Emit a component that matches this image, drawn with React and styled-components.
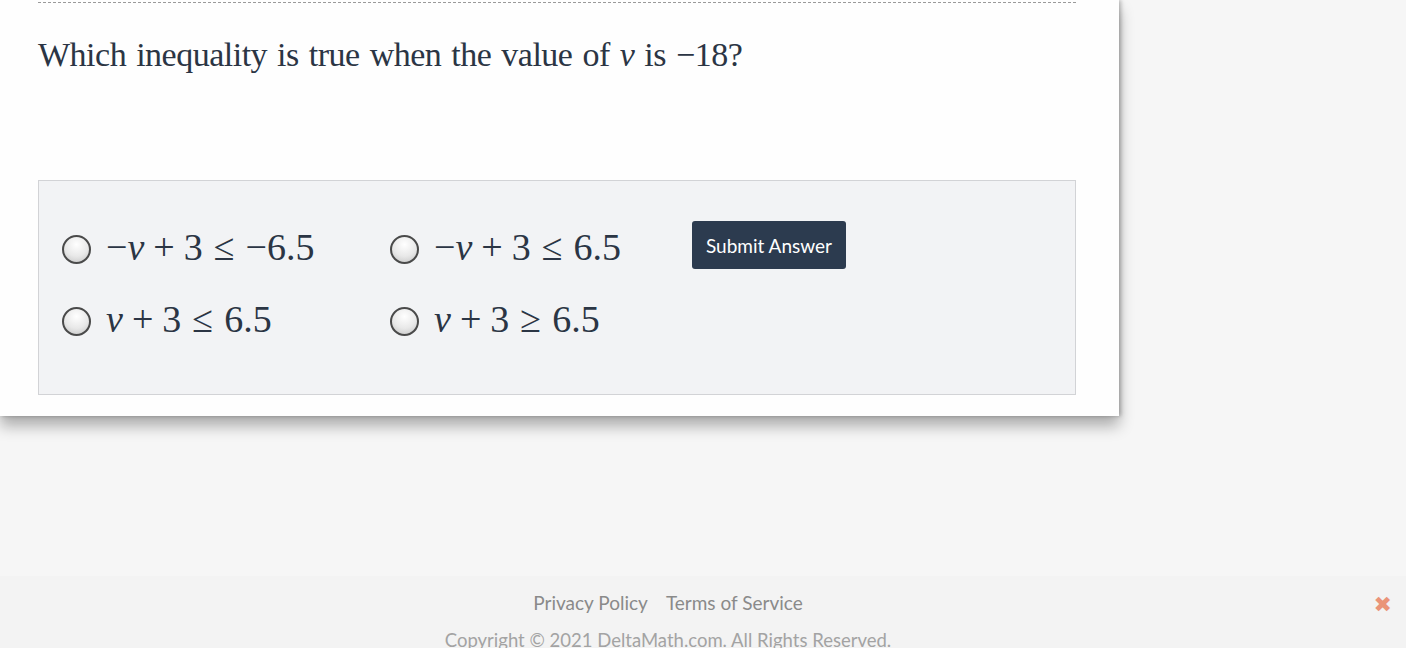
import React from "react";
import styled, { createGlobalStyle } from "styled-components";

const GlobalStyle = createGlobalStyle`
  html, body {
    margin: 0;
    padding: 0;
    background: #f7f7f7;
    overflow: hidden;
  }
`;

const Page = styled.div`
  width: 1406px;
  height: 648px;
  display: flex;
  flex-direction: column;
  background: #f6f6f6;
  overflow: hidden;
`;

const Card = styled.div`
  width: 1119px;
  height: 416px;
  flex-shrink: 0;
  box-sizing: border-box;
  background: #fefefe;
  box-shadow: 0 10px 14px rgba(0, 0, 0, 0.3), 2px 0 4px rgba(0, 0, 0, 0.25);
  padding: 2px 0 0 38px;
  display: flex;
  flex-direction: column;
`;

const Inner = styled.div`
  width: 1038px;
  display: flex;
  flex-direction: column;
`;

const DashedRule = styled.div`
  border-top: 1px dashed #9a9a9a;
  height: 0;
`;

const Question = styled.div`
  font-family: "Liberation Serif", "Times New Roman", serif;
  font-size: 34px;
  color: #2b3544;
  margin-top: 30px;
  line-height: 44px;
  letter-spacing: -0.5px;
  word-spacing: 2px;
`;

const MathI = styled.span`
  font-style: italic;
  font-family: "Liberation Serif", serif;
`;

const AnswerBox = styled.div`
  margin-top: 103px;
  height: 215px;
  box-sizing: border-box;
  background: #f2f3f5;
  border: 1px solid #d2d3d6;
  display: flex;
  align-items: flex-start;
  padding: 41px 0 0 23px;
`;

const Options = styled.div`
  display: grid;
  grid-template-columns: 328px 302px;
  row-gap: 22px;
`;

const Option = styled.label`
  display: flex;
  align-items: center;
  gap: 15px;
  height: 50px;
  cursor: pointer;
`;

const Radio = styled.span`
  width: 29px;
  height: 29px;
  box-sizing: border-box;
  border-radius: 50%;
  border: 2.5px solid #4a4a4a;
  background: radial-gradient(circle at 50% 30%, #ffffff 0%, #e8e8e8 55%, #c2c2c2 100%);
  flex-shrink: 0;
  margin-top: 4px;
`;

const MathExpr = styled.span`
  font-family: "Liberation Serif", "Times New Roman", serif;
  font-size: 38px;
  color: #2b3544;
  white-space: pre;
`;

const Op = styled.span`
  margin: 0 ${(p) => (p.rel ? 11 : 9)}px;
`;

const SubmitButton = styled.button`
  margin-top: -1px;
  height: 48px;
  width: 154px;
  background: #2c3b4f;
  color: #ffffff;
  border: none;
  border-radius: 3px;
  font-family: Lato, "Open Sans", sans-serif;
  font-size: 19px;
  cursor: pointer;
  padding: 0;
`;

const Footer = styled.div`
  margin-top: 160px;
  flex: 1;
  background: #f3f3f3;
  display: flex;
  flex-direction: column;
  align-items: center;
  padding-right: 70px;
  padding-top: 15px;
  position: relative;
  font-family: Lato, "Open Sans", sans-serif;
  color: #8c8c8c;
  font-size: 19px;
`;

const FooterLinks = styled.div`
  display: flex;
  gap: 18px;
`;

const FooterLink = styled.a`
  color: #8a8a8a;
  text-decoration: none;
`;

const Copyright = styled.div`
  margin-top: 15px;
  color: #a3a3a3;
  font-size: 18.5px;
`;

const CloseX = styled.span`
  position: absolute;
  right: 14px;
  top: 16px;
  color: #ea9479;
  font-size: 22px;
  font-weight: bold;
  font-family: "DejaVu Sans", sans-serif;
`;

const V = () => <MathI>v</MathI>;

export default function App() {
  return (
    <Page>
      <GlobalStyle />
      <Card>
        <Inner>
          <DashedRule />
          <Question>
            Which inequality is true when the value of <V /> is −18?
          </Question>
          <AnswerBox>
            <Options>
              <Option>
                <Radio />
                <MathExpr>
                  −<V />
                  <Op>+</Op>3<Op rel>≤</Op>−6.5
                </MathExpr>
              </Option>
              <Option>
                <Radio />
                <MathExpr>
                  −<V />
                  <Op>+</Op>3<Op rel>≤</Op>6.5
                </MathExpr>
              </Option>
              <Option>
                <Radio />
                <MathExpr>
                  <V />
                  <Op>+</Op>3<Op rel>≤</Op>6.5
                </MathExpr>
              </Option>
              <Option>
                <Radio />
                <MathExpr>
                  <V />
                  <Op>+</Op>3<Op rel>≥</Op>6.5
                </MathExpr>
              </Option>
            </Options>
            <SubmitButton>Submit Answer</SubmitButton>
          </AnswerBox>
        </Inner>
      </Card>
      <Footer>
        <FooterLinks>
          <FooterLink>Privacy Policy</FooterLink>
          <FooterLink>Terms of Service</FooterLink>
        </FooterLinks>
        <Copyright>Copyright © 2021 DeltaMath.com. All Rights Reserved.</Copyright>
        <CloseX>✖</CloseX>
      </Footer>
    </Page>
  );
}
